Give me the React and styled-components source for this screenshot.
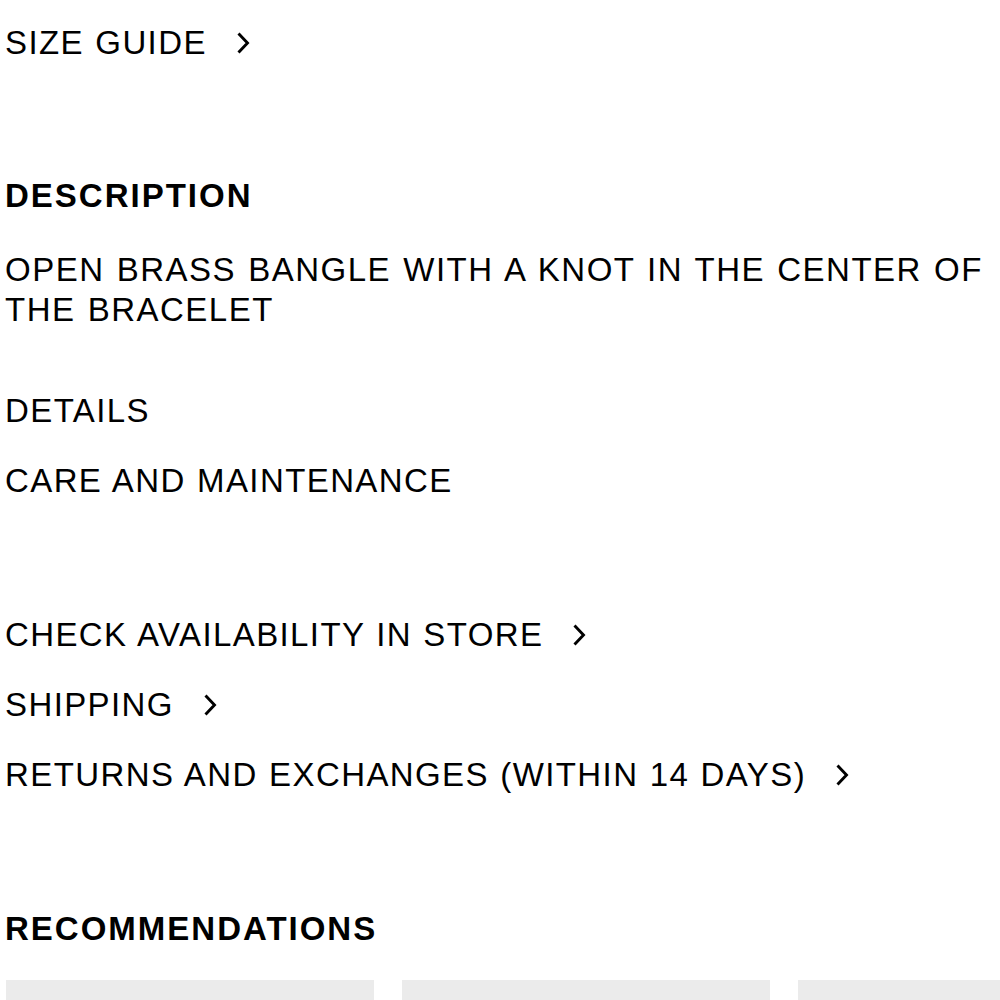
import React from "react";
import styled, { createGlobalStyle } from "styled-components";

const Global = createGlobalStyle`
  html, body { margin: 0; padding: 0; background: #fff; }
  body {
    font-family: "Liberation Sans", Arial, Helvetica, sans-serif;
    color: #000;
    overflow: hidden;
  }
`;

const Page = styled.div`
  width: 1000px;
  height: 1000px;
  overflow: hidden;
  box-sizing: border-box;
  padding: 23px 0 0 5px;
  display: flex;
  flex-direction: column;
  & > * { flex-shrink: 0; }
`;

const Section = styled.section`
  display: flex;
  flex-direction: column;
  flex-shrink: 0;
  gap: ${(p) => p.$gap || 0}px;
  margin-top: ${(p) => p.$top || 0}px;
`;

const Heading = styled.h2`
  margin: 0;
  font-size: 33px;
  line-height: 40px;
  font-weight: 700;
  letter-spacing: 2px;
  text-transform: uppercase;
`;

const Paragraph = styled.p`
  margin: 0;
  font-size: 33px;
  line-height: 40px;
  font-weight: 400;
  letter-spacing: 1.5px;
  word-spacing: 1.5px;
  padding-right: 6px;
`;

const LinkRow = styled.a`
  display: flex;
  align-items: center;
  gap: 29px;
  height: 40px;
  flex-shrink: 0;
  font-size: 33px;
  line-height: 40px;
  letter-spacing: 1.4px;
  word-spacing: 0.8px;
  color: #000;
  text-decoration: none;
  cursor: pointer;
`;

const Chevron = styled.svg`
  width: 14px;
  height: 24px;
  flex: none;
`;

const Cards = styled.div`
  display: grid;
  grid-template-columns: repeat(3, 368px);
  gap: 28px;
  margin-top: 31px;
  margin-left: 1px;
  flex-shrink: 0;
`;

const Card = styled.div`
  height: 300px;
  background: #ebebeb;
`;

const Arrow = () => (
  <Chevron viewBox="0 0 14 24" fill="none">
    <polyline
      points="2.5,2.5 11.5,12 2.5,21.5"
      stroke="#000"
      strokeWidth="2.9"
      strokeLinecap="butt"
      strokeLinejoin="miter"
    />
  </Chevron>
);

export default function App() {
  return (
    <>
      <Global />
      <Page>
        <LinkRow>
          SIZE GUIDE
          <Arrow />
        </LinkRow>

        <Section $top={113} $gap={34}>
          <Heading>Description</Heading>
          <Paragraph>
            OPEN BRASS BANGLE WITH A KNOT IN THE CENTER OF THE BRACELET
          </Paragraph>
        </Section>

        <Section $top={61} $gap={30}>
          <LinkRow>DETAILS</LinkRow>
          <LinkRow>CARE AND MAINTENANCE</LinkRow>
        </Section>

        <Section $top={114} $gap={30}>
          <LinkRow>
            CHECK AVAILABILITY IN STORE
            <Arrow />
          </LinkRow>
          <LinkRow>
            SHIPPING
            <Arrow />
          </LinkRow>
          <LinkRow>
            RETURNS AND EXCHANGES (WITHIN 14 DAYS)
            <Arrow />
          </LinkRow>
        </Section>

        <Section $top={114} $gap={0}>
          <Heading>Recommendations</Heading>
          <Cards>
            <Card />
            <Card />
            <Card />
          </Cards>
        </Section>
      </Page>
    </>
  );
}
